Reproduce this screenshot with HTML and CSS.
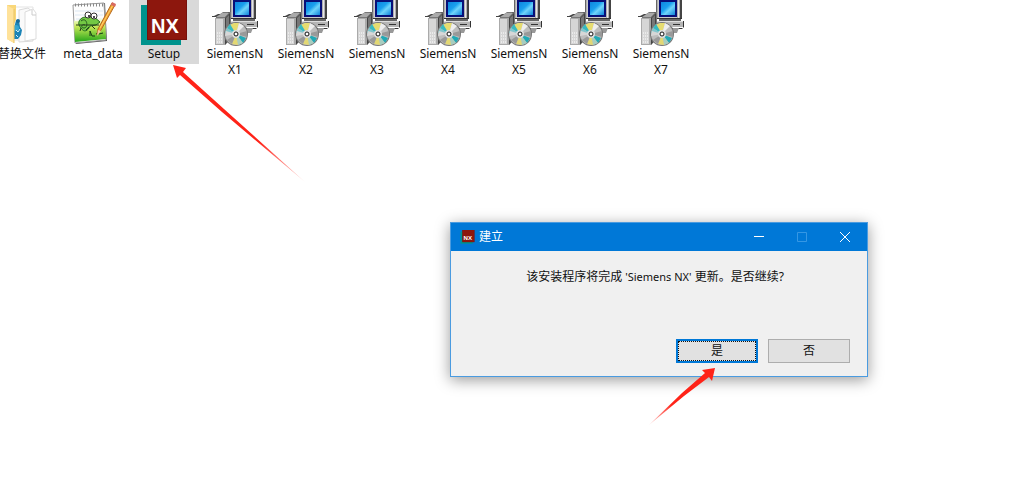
FILE: index.html
```
<!DOCTYPE html>
<html lang="zh-CN">
<head>
<meta charset="utf-8">
<meta name="viewport" content="width=device-width, initial-scale=1">
<title>建立</title>
<link rel="stylesheet" href="styles.css">
</head>
<body>
<svg class="sprite" aria-hidden="true">
  <defs>
    <linearGradient id="screen" x1="0" y1="0" x2="1" y2="1">
      <stop offset="0" stop-color="#0e86de"/><stop offset=".4" stop-color="#1aa0ee"/><stop offset=".6" stop-color="#6fd4fa"/><stop offset="1" stop-color="#0d82da"/>
    </linearGradient>
    <linearGradient id="fade-a" gradientUnits="userSpaceOnUse" x1="174" y1="66" x2="305" y2="182">
      <stop offset=".65" stop-color="#ff2318"/><stop offset="1" stop-color="#ff2318" stop-opacity=".15"/>
    </linearGradient>
    <linearGradient id="fade-b" gradientUnits="userSpaceOnUse" x1="715" y1="368" x2="649" y2="425">
      <stop offset=".65" stop-color="#ff2318"/><stop offset="1" stop-color="#ff2318" stop-opacity=".15"/>
    </linearGradient>
    <linearGradient id="meadow" x1="0" y1="0" x2="0" y2="1">
      <stop offset="0" stop-color="#fbfdf2"/><stop offset=".35" stop-color="#c9ea58"/><stop offset="1" stop-color="#25a51a"/>
    </linearGradient>
    <symbol id="installer" viewBox="0 0 48 46">
      <path d="M19 0h25v18H19z" fill="#b0b0b0"/>
      <path d="M19 0h1v18h-1z" fill="#666"/>
      <path d="M21 0h19v18H21z" fill="#cbcbcb"/>
      <path d="M22 0h18v17H22z" fill="#070f78"/>
      <path d="M24 2h14v13H24z" fill="url(#screen)"/>
      <path d="M41 0h1v18h-1z" fill="#e6e6e6"/>
      <path d="M43 0h2v18h-2z" fill="#444"/>
      <path d="M19 18h26v1H19z" fill="#333"/>
      <path d="M22 19h22v2H22z" fill="#666"/>
      <path d="M19 21h27v6H19z" fill="#b5b5b5"/>
      <path d="M19 21h27v1H19z" fill="#dedede"/>
      <path d="M36 24h7v1h-7z" fill="#333"/>
      <path d="M46 21h1v6l-2 2H20v-1h26z" fill="#333"/>
      <path d="M36 28h6l-2 5h-4z" fill="#999"/>
      <path d="M5 17l7-5h8v27l-6 6H5z" fill="#777"/>
      <path d="M4 18h10v27H4z" fill="#aaa"/>
      <path d="M5 19h7v25H5z" fill="#d6d6d6"/>
      <path d="M14 18l5-5v25l-5 7z" fill="#444"/>
      <path d="M15 18l3-3v23l-3 4z" fill="#777"/>
      <path d="M1 17h13l5-5-5 2H7l-4 2H1z" fill="#444"/>
      <path d="M5 17l6-4h7l-4 4z" fill="#aaa"/>
      <path d="M6 33h5M6 36h5M6 39h5M6 42h5" stroke="#fff" stroke-dasharray="1 1"/>
      <circle cx="25" cy="34" r="12" fill="#777"/>
      <circle cx="25" cy="34" r="11" fill="#bdbdbd"/>
      <path d="M25 34L19 25l4-2 5 0z" fill="#e6dc70"/>
      <path d="M25 34l3-11 5 3z" fill="#eee"/>
      <path d="M25 34l-9-6 3-4z" fill="#37b9c0"/>
      <path d="M25 34l-11-1 2-5z" fill="#82c6cc"/>
      <path d="M25 34l-11 2 1-5z" fill="#d7d7d7"/>
      <path d="M25 34l10 4-3 5z" fill="#21a9b5"/>
      <path d="M25 34l7 9-5 2z" fill="#a8cdc0"/>
      <path d="M25 34l2 11-6-1z" fill="#e3d873"/>
      <path d="M25 34l-4 10-5-4z" fill="#999"/>
      <path d="M25 34l11-3v6z" fill="#999"/>
      <circle cx="25" cy="34" r="4" fill="#ddd"/>
      <circle cx="25" cy="34" r="2" fill="#fff" stroke="#111"/>
    </symbol>
    <symbol id="nx" viewBox="0 0 48 46">
      <path d="M1 5h40v40H1z" fill="#00938d"/>
      <path d="M7 0h40v40H7z" fill="#77100b"/>
      <path d="M8 0h38v39H8z" fill="#8d170d"/>
      <text x="11" y="33" class="nx-letters">NX</text>
    </symbol>
  </defs>
</svg>

<main class="files">
  <figure class="file">
    <svg class="file-icon" viewBox="0 0 48 46" aria-hidden="true">
      <path d="M13 7h22v33H13z" fill="#fff" stroke="#e3e3e3"/>
      <path d="M21 10l9-2 5 4v29l-14 1z" fill="#fafafa" stroke="#dadada"/>
      <path d="M27 12l8-3 3 4v26l-11 2z" fill="#fff" stroke="#dcdcdc"/>
      <path d="M34 10v5h4" fill="none" stroke="#ccc"/>
      <path d="M18 20l3 1 1 6 2 3-1 5-3 4-4 0-1-6z" fill="#1b83b6"/>
      <circle cx="20" cy="21" r="2" fill="#186b9b"/><circle cx="18" cy="28" r="3" fill="#35a5d1"/>
      <path d="M18 30l2 2 2-3M18 35l2 2" stroke="#d8f0f8" fill="none"/>
      <path d="M9 5h9v15l-2 4v19l-7-4z" fill="#f9d779"/>
      <path d="M9 5l3 2 4 2v34l-7-4z" fill="#ffe29a"/>
      <path d="M16 9v34" stroke="#e9c463"/>
    </svg>
    <figcaption class="file-name">替换文件</figcaption>
  </figure>
  <figure class="file">
    <svg class="file-icon" viewBox="0 0 48 46" aria-hidden="true">
      <path d="M5 5l31-2 2 38-31 3z" fill="#555"/>
      <path d="M4 5l31-2 2 37-31 3z" fill="#fdfdfd" stroke="#999"/>
      <path d="M6 11h28M6 15h28M7 19h28" stroke="#dbe7f3"/>
      <path d="M5 21l31-3 1 21-31 3z" fill="url(#meadow)"/>
      <path d="M6 5h29" stroke="#888" stroke-width="3" stroke-dasharray="1 2"/>
      <path d="M12 28c-5-5-1-11 5-11 3 0 4-2 7-1l7 6-4 3-6 1c-2 5-6 7-9 2z" fill="#73c844" stroke="#297023"/>
      <path d="M12 21c6-5 8 7 3 7-4 0-2-5 1-3" fill="none" stroke="#265c20"/>
      <path d="M7 25h23M20 27l-3 3M23 26l3 3M12 28l-1 3" fill="none" stroke="#243b1c"/>
      <circle cx="19" cy="15" r="3" fill="#fff" stroke="#333"/><circle cx="25" cy="16" r="3" fill="#fff" stroke="#333"/>
      <circle cx="20" cy="16" r="1" fill="#111"/><circle cx="25" cy="17" r="1" fill="#111"/>
      <path d="M21 36v-5l2 5h3M27 34l2-1M30 34l4-1" fill="none" stroke="#173b15"/>
      <path d="M43 3l3 2-14 25-4 5 1-6z" fill="#f5a331" stroke="#b36b22"/>
      <path d="M44 5L31 28" stroke="#ffd46b"/>
      <path d="M43 2l4 2-1 3-4-2z" fill="#d96b62"/>
      <path d="M29 30l3 1-4 5z" fill="#ecc99c"/>
    </svg>
    <figcaption class="file-name">meta_data</figcaption>
  </figure>
  <figure class="file file-selected">
    <svg class="file-icon" aria-hidden="true"><use href="#nx"/></svg>
    <figcaption class="file-name">Setup</figcaption>
  </figure>
  <figure class="file"><svg class="file-icon" aria-hidden="true"><use href="#installer"/></svg><figcaption class="file-name">SiemensN<br>X1</figcaption></figure>
  <figure class="file"><svg class="file-icon" aria-hidden="true"><use href="#installer"/></svg><figcaption class="file-name">SiemensN<br>X2</figcaption></figure>
  <figure class="file"><svg class="file-icon" aria-hidden="true"><use href="#installer"/></svg><figcaption class="file-name">SiemensN<br>X3</figcaption></figure>
  <figure class="file"><svg class="file-icon" aria-hidden="true"><use href="#installer"/></svg><figcaption class="file-name">SiemensN<br>X4</figcaption></figure>
  <figure class="file"><svg class="file-icon" aria-hidden="true"><use href="#installer"/></svg><figcaption class="file-name">SiemensN<br>X5</figcaption></figure>
  <figure class="file"><svg class="file-icon" aria-hidden="true"><use href="#installer"/></svg><figcaption class="file-name">SiemensN<br>X6</figcaption></figure>
  <figure class="file"><svg class="file-icon" aria-hidden="true"><use href="#installer"/></svg><figcaption class="file-name">SiemensN<br>X7</figcaption></figure>
</main>

<section class="dialog" role="dialog" aria-labelledby="dialog-title">
  <header class="title-bar">
    <svg class="title-icon" aria-hidden="true"><use href="#nx"/></svg>
    <h1 class="title" id="dialog-title">建立</h1>
    <div class="window-controls">
      <button class="window-button" aria-label="最小化"><svg class="glyph" viewBox="0 0 10 10"><path d="M0 4.500h10"/></svg></button>
      <button class="window-button" aria-label="最大化" disabled><svg class="glyph" viewBox="0 0 10 10"><path d="M.5 .5h9v9h-9z"/></svg></button>
      <button class="window-button" aria-label="关闭"><svg class="glyph" viewBox="0 0 10 10"><path d="M0 0l10 10M10 0L0 10"/></svg></button>
    </div>
  </header>
  <div class="dialog-body">
    <p class="message">该安装程序将完成 <span class="product">'Siemens NX'</span> 更新。是否继续?</p>
    <div class="actions">
      <button class="action action-default">是</button>
      <button class="action">否</button>
    </div>
  </div>
</section>

<svg class="annotations" viewBox="0 0 1024 499" aria-hidden="true">
  <path d="M173 65L186 68 183 72 224 109 305 182 222 112 180 75 177 78z" fill="url(#fade-a)"/>
  <path d="M715 368L702 370 705 373 682 393 649 425 684 396 709 377 712 381z" fill="url(#fade-b)"/>
</svg>
</body>
</html>
```
FILE: styles.css
```
* {
  box-sizing: border-box;
}

body {
  margin: 0;
  min-height: 100vh;
  position: relative;
  overflow: hidden;
  background: #fff;
  color: #111;
  font: 12px/16px "Noto Sans", "Noto Sans CJK SC", sans-serif;
}

.sprite {
  position: absolute;
  width: 0;
  height: 0;
}

.files {
  display: flex;
  align-items: flex-start;
  gap: 1px;
  margin-left: -13px;
}

.file {
  flex: none;
  width: 70px;
  margin: 0;
  padding-bottom: 2px;
  display: flex;
  flex-direction: column;
  align-items: center;
}

.file-selected {
  background: #d9d9d9;
}

.file-icon {
  width: 48px;
  height: 46px;
}

.file-name {
  text-align: center;
}

.nx-letters {
  font: bold 20px "Liberation Sans", sans-serif;
  fill: #fff;
}

.dialog {
  position: absolute;
  left: 450px;
  top: 222px;
  width: 418px;
  background: #f0f0f0;
  border: 1px solid #4a9be0;
  box-shadow: 0 3px 14px rgba(0, 0, 0, 0.4);
}

.title-bar {
  display: flex;
  align-items: center;
  height: 28px;
  padding: 0 1px 0 9px;
  gap: 4px;
  background: #0078d7;
  color: #fff;
}

.title-icon {
  width: 15px;
  height: 14px;
}

.title {
  margin: 0;
  font-size: 12px;
  font-weight: 400;
}

.window-controls {
  display: flex;
  align-self: stretch;
  margin-left: auto;
}

.window-button {
  width: 43px;
  padding: 0;
  border: 0;
  background: none;
  color: #fff;
  display: grid;
  place-items: center;
}

.window-button:disabled {
  color: #3597e4;
}

.glyph {
  width: 10px;
  height: 10px;
  fill: none;
  stroke: currentColor;
}

.dialog-body {
  padding: 18px 17px 13px;
}

.message {
  margin: 0;
  padding-right: 8px;
  text-align: center;
  font-size: 12px;
}

.product {
  font-size: 11px;
}

.actions {
  display: flex;
  justify-content: flex-end;
  gap: 10px;
  margin-top: 54px;
}

.action {
  width: 82px;
  height: 24px;
  padding: 0;
  border: 1px solid #adadad;
  background: #e1e1e1;
  color: #111;
  font: inherit;
}

.action-default {
  border: 2px solid #0078d7;
  outline: 1px dotted #111;
  outline-offset: -3px;
}

.annotations {
  position: absolute;
  left: 0;
  top: 0;
  width: 1024px;
  height: 499px;
  pointer-events: none;
}
```
